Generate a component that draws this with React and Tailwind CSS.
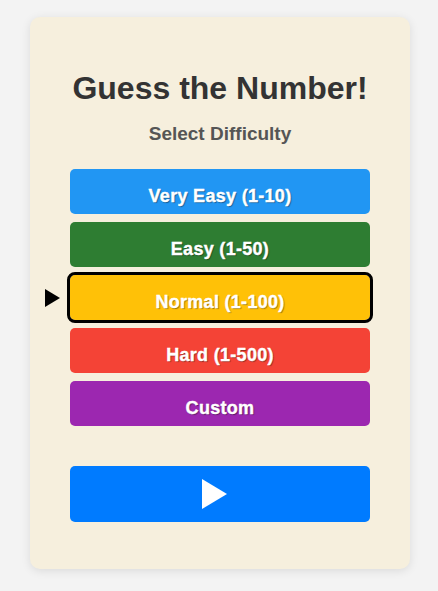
import React, { useState } from "react";

/* ==================== DATA ==================== */
const LEVELS = [
  { id: "very-easy", label: "Very Easy (1-10)", color: "bg-[#2196f3]" },
  { id: "easy", label: "Easy (1-50)", color: "bg-[#2e7d32]" },
  { id: "normal", label: "Normal (1-100)", color: "bg-[#ffc107]" },
  { id: "hard", label: "Hard (1-500)", color: "bg-[#f44336]" },
  { id: "custom", label: "Custom", color: "bg-[#9c27b0]" },
];

/* ==================== APP ==================== */
export default function App() {
  const [selected, setSelected] = useState("normal");

  return (
    <div className="min-h-screen bg-[#f3f3f3] flex justify-center pt-[17px] pl-[2px] font-['Liberation_Sans',Arial,sans-serif]">
      <div className="w-[380px] h-[552px] bg-[#f6efdd] rounded-[10px] shadow-[0_2px_10px_rgba(0,0,0,0.1)] px-10 pt-[53px] pb-[47px] flex flex-col">
        {/* Header */}
        <h1 className="text-center text-[32px] leading-[37px] font-bold text-[#333]">
          Guess the Number!
        </h1>
        <p className="mt-[16px] text-center text-[19px] leading-[22px] font-bold text-[#555]">
          Select Difficulty
        </p>

        {/* Levels */}
        <div className="mt-[24px] flex flex-col gap-2">
          {LEVELS.map((lvl) => (
            <div key={lvl.id} className="relative">
              {selected === lvl.id && (
                <svg
                  className="absolute left-[-25px] top-1/2 -translate-y-1/2"
                  width="15"
                  height="18"
                  viewBox="0 0 15 18"
                >
                  <path d="M0 0 L15 9 L0 18 Z" fill="#000" />
                </svg>
              )}
              <button
                onClick={() => setSelected(lvl.id)}
                className={`w-full h-[45px] pt-[10px] rounded-[5px] ${lvl.color} text-white text-[18px] tracking-[0.3px] font-bold flex items-center justify-center [-webkit-text-stroke:0.4px_white] [text-shadow:1px_1px_1px_rgba(0,0,0,0.4)] ${
                  selected === lvl.id ? "outline-[3px] outline-solid outline-black" : ""
                }`}
              >
                {lvl.label}
              </button>
            </div>
          ))}
        </div>

        {/* Play */}
        <button className="mt-[40px] w-full h-[56px] rounded-[5px] bg-[#007bff] flex items-center justify-center">
          <svg className="mr-[11px]" width="25" height="30" viewBox="0 0 25 30">
            <path d="M0 0 L25 15 L0 30 Z" fill="#fff" />
          </svg>
        </button>
      </div>
    </div>
  );
}
